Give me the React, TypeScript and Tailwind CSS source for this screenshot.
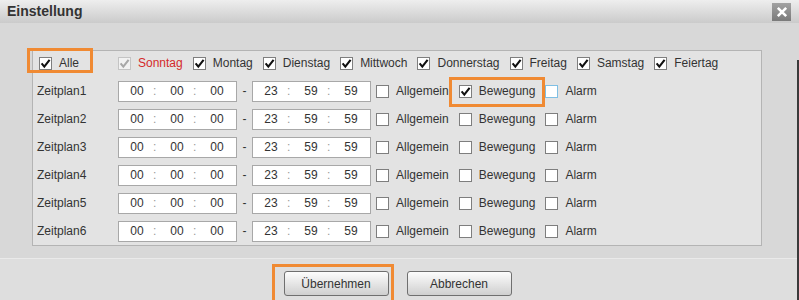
import React from 'react';

type BoxProps = { checked?: boolean; disabled?: boolean; focus?: boolean };

function CheckBox({ checked, disabled, focus }: BoxProps) {
  const border = focus ? 'border-[#7fbfe4]' : disabled ? 'border-[#c4c4c4]' : 'border-[#7e7e7e]';
  return (
    <div className={`w-[13px] h-[13px] shrink-0 border ${border} ${disabled ? 'bg-[#f2f2f2]' : 'bg-white'}`}>
      {checked && (
        <svg width="11" height="11" viewBox="0 0 11 11">
          <path
            d="M1.6 5.4 L4.3 8.6 L9.6 1.8"
            fill="none"
            stroke={disabled ? '#a8a8a8' : '#111'}
            strokeWidth="2.1"
          />
        </svg>
      )}
    </div>
  );
}

function Option({ label, checked, disabled, focus, red }: BoxProps & { label: string; red?: boolean }) {
  return (
    <div className="flex items-center gap-[7px]">
      <CheckBox checked={checked} disabled={disabled} focus={focus} />
      <span className={red ? 'text-[#d42a2a]' : 'text-[#333]'}>{label}</span>
    </div>
  );
}

function TimeBox({ h, m, s }: { h: string; m: string; s: string }) {
  return (
    <div className="flex items-center w-[119px] h-[21px] bg-white border border-[#a8a8a8] pl-[2px] text-[#333]">
      <span className="w-[32px] text-center">{h}</span>
      <span className="w-[8px] text-[#999]">:</span>
      <span className="w-[32px] text-center">{m}</span>
      <span className="w-[8px] text-[#999]">:</span>
      <span className="w-[32px] text-center">{s}</span>
    </div>
  );
}

const days = ['Montag', 'Dienstag', 'Mittwoch', 'Donnerstag', 'Freitag', 'Samstag', 'Feiertag'];

export default function App() {
  const rows = [1, 2, 3, 4, 5, 6];
  return (
    <div className="relative w-[799px] h-[300px] overflow-hidden bg-[#d8d8d8] text-[12px] font-['Liberation_Sans',Arial,sans-serif]">
      {/* title bar */}
      <div className="flex items-center justify-between h-[23px] pl-[7px] pr-[8px] bg-linear-to-b from-[#eeeeee] to-[#cbcbcb]">
        <span className="text-[14px] font-bold text-[#333]">Einstellung</span>
        <div className="flex items-center justify-center w-[19px] h-[18px] bg-linear-to-b from-[#a2a2a2] to-[#7a7a7a]">
          <svg width="12" height="12" viewBox="0 0 12 12">
            <path d="M1.8 1.8 L10.2 10.2 M10.2 1.8 L1.8 10.2" stroke="#fff" strokeWidth="2.6" />
          </svg>
        </div>
      </div>

      <div className="flex h-[277px]">
        <div className="flex flex-col flex-1">
          {/* panel */}
          <div className="pt-[27px] pl-[32px]">
            <div className="w-[730px] bg-[#e3e3e3] border border-[#b4b4b4]">
              <div className="flex items-center h-[24px]">
                <div className="w-[85px] pl-[6px]">
                  <Option label="Alle" checked />
                </div>
                <div className="flex items-center gap-[10px]">
                  <Option label="Sonntag" checked disabled red />
                  {days.map(d => (
                    <Option key={d} label={d} checked />
                  ))}
                </div>
              </div>
              <div className="mt-[2px]">
                {rows.map(n => (
                  <div key={n} className="flex items-center h-[28px]">
                    <span className="w-[85px] pl-[4px] text-[#333]">Zeitplan{n}</span>
                    <TimeBox h="00" m="00" s="00" />
                    <span className="w-[15px] text-center text-[#333]">-</span>
                    <TimeBox h="23" m="59" s="59" />
                    <div className="flex items-center gap-[10px] ml-[5px]">
                      <Option label="Allgemein" />
                      <Option label="Bewegung" checked={n === 1} />
                      <Option label="Alarm" focus={n === 1} />
                    </div>
                  </div>
                ))}
              </div>
            </div>
          </div>

          {/* footer */}
          <div className="mt-[12px] flex-1 bg-[#dedede] border-t border-[#eaeaea] flex justify-center gap-[18px] pt-[12px] pr-[2px]">
            <button className="w-[105px] h-[25px] rounded-[3px] border border-[#6f6f6f] bg-linear-to-b from-[#fdfdfd] to-[#cfcfcf] text-[#333]">
              Übernehmen
            </button>
            <button className="w-[105px] h-[25px] rounded-[3px] border border-[#6f6f6f] bg-linear-to-b from-[#fdfdfd] to-[#cfcfcf] text-[#333]">
              Abbrechen
            </button>
          </div>
        </div>
        <div className="flex flex-col w-[2px]">
          <div className="h-[37px] bg-[#d8d8d8]" />
          <div className="flex-1 bg-[#3a3a3a]" />
        </div>
      </div>

      {/* orange highlight annotations */}
      <div className="absolute left-[27px] top-[48px] w-[66px] h-[25px] border-[3px] border-[#f08a33]" />
      <div className="absolute left-[449px] top-[77px] w-[96px] h-[30px] border-[3px] border-[#f08a33]" />
      <div className="absolute left-[272px] top-[264px] w-[122px] h-[40px] border-[3px] border-[#f08a33]" />
    </div>
  );
}
